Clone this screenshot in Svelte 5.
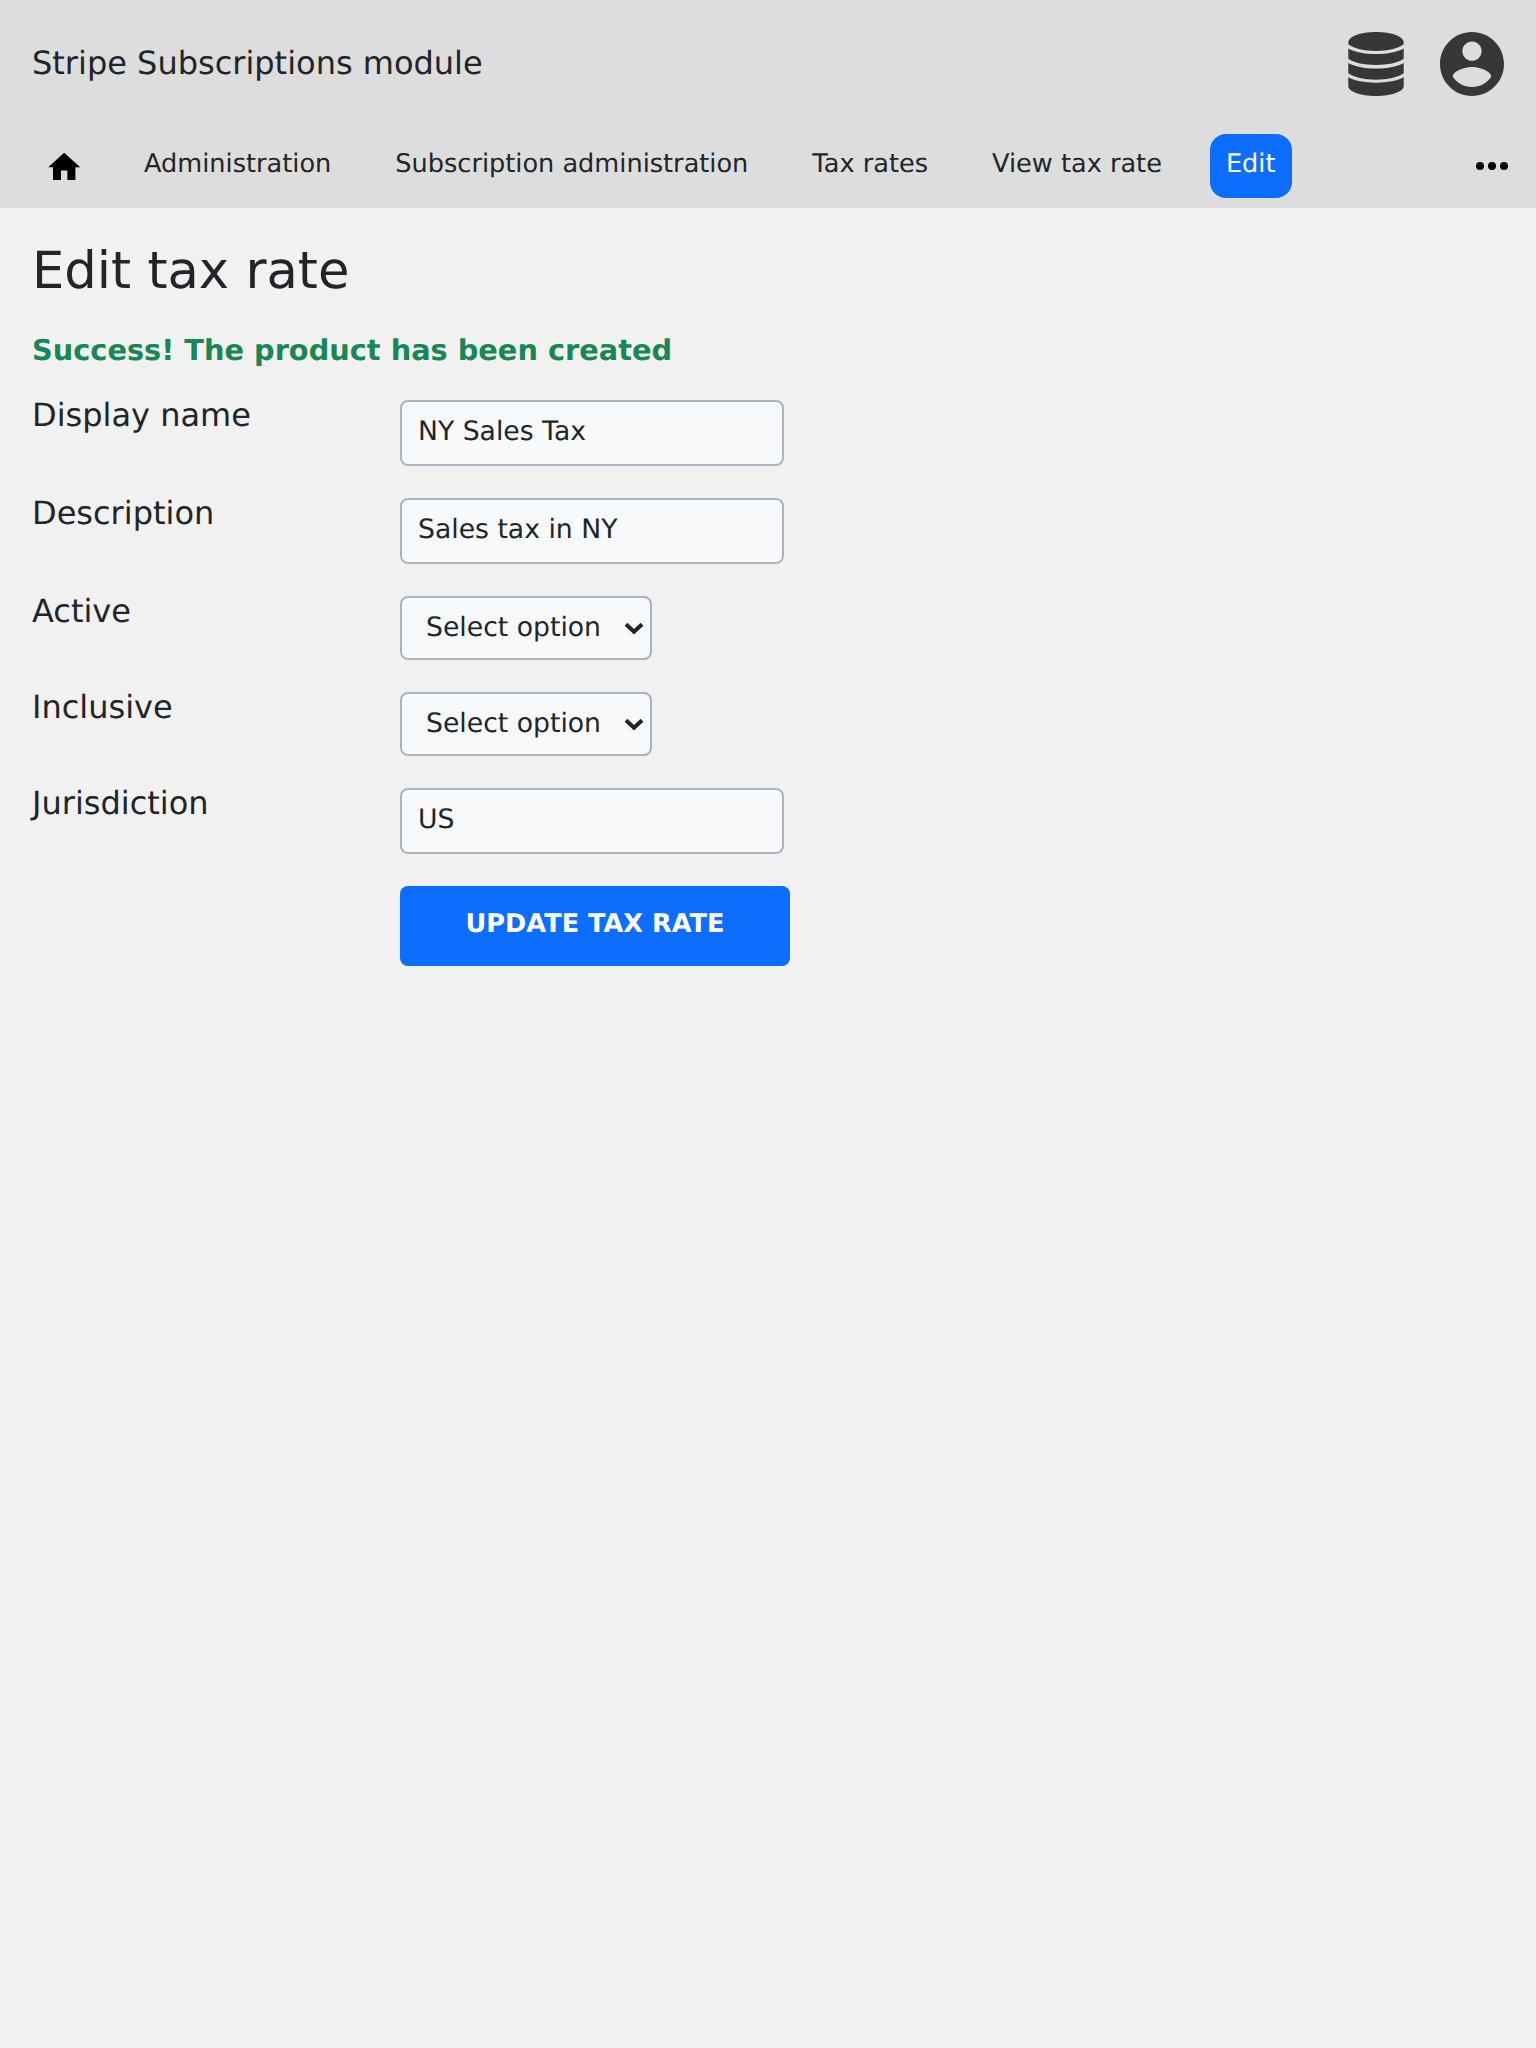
<script>
  const links = ['Administration', 'Subscription administration', 'Tax rates', 'View tax rate'];
  const fields = [
    { id: 'name', label: 'Display name', value: 'NY Sales Tax' },
    { id: 'description', label: 'Description', value: 'Sales tax in NY' },
    { id: 'active', label: 'Active', select: true },
    { id: 'inclusive', label: 'Inclusive', select: true },
    { id: 'jurisdiction', label: 'Jurisdiction', value: 'US' }
  ];
</script>

<header>
  <div class="top">
    <div class="title">Stripe Subscriptions module</div>
    <div class="tools">
      <svg class="db" viewBox="-0.3 0 56.6 64" preserveAspectRatio="none">
        <path d="M0 10.5C0 4.5 12 0 28 0S56 4.5 56 10.5V12.3C50 16.7 40 19 28 19S6 16.7 0 12.3Z" />
        <path d="M0 16.5C6 20 16 22 28 22S50 20 56 16.5V26.8C50 31 40 33 28 33S6 31 0 26.8Z" />
        <path d="M0 31C6 34.5 16 36.5 28 36.5S50 34.5 56 31V41.3C50 45.5 40 47.7 28 47.7S6 45.5 0 41.3Z" />
        <path d="M0 45.3C6 48.8 16 50.7 28 50.7S50 48.8 56 45.3V54C56 59.5 44 64 28 64S0 59.5 0 54Z" />
      </svg>
      <svg class="user" viewBox="2 2 20 20">
        <path d="M12 2C6.48 2 2 6.48 2 12s4.48 10 10 10 10-4.48 10-10S17.52 2 12 2zm0 3c1.66 0 3 1.34 3 3s-1.34 3-3 3-3-1.34-3-3 1.34-3 3-3zm0 14.2c-2.5 0-4.71-1.28-6-3.22.03-1.99 4-3.08 6-3.08 1.99 0 5.97 1.09 6 3.08-1.29 1.94-3.5 3.22-6 3.22z" />
      </svg>
    </div>
  </div>
  <nav>
    <a class="home" href="#home" aria-label="Home">
      <svg viewBox="0 0 24 24"><path d="M10 20v-6h4v6h5v-8h3L12 3 2 12h3v8z" /></svg>
    </a>
    {#each links as link}
      <a href="#page">{link}</a>
    {/each}
    <a class="current" href="#edit">Edit</a>
    <svg class="more" viewBox="0 0 24 24"><circle cx="6" cy="12" r="2" /><circle cx="12" cy="12" r="2" /><circle cx="18" cy="12" r="2" /></svg>
  </nav>
</header>

<main>
  <h1>Edit tax rate</h1>
  <p class="success">Success! The product has been created</p>
  <form>
    {#each fields as field}
      <div class="row">
        <label for={field.id}>{field.label}</label>
        {#if field.select}
          <div class="select">
            <select id={field.id}><option>Select option</option></select>
            <svg viewBox="0 0 20 13"><path d="M2 2.2 10 9.8 18 2.2" /></svg>
          </div>
        {:else}
          <input id={field.id} type="text" value={field.value} />
        {/if}
      </div>
    {/each}
    <button type="button">UPDATE TAX RATE</button>
  </form>
</main>

<style>
  :global(body) {
    background: #f1f1f1;
    color: #212529;
    font: 32px/48px 'DejaVu Sans', sans-serif;
    text-rendering: geometricPrecision;
  }
  header {
    height: 208px;
    background: #ddd;
  }
  .top {
    display: flex;
    justify-content: space-between;
    height: 134px;
    padding: 0 32px;
    box-sizing: border-box;
  }
  .title { padding-top: 39px; }
  .tools {
    display: flex;
    gap: 36px;
    padding-top: 32px;
    fill: #373737;
  }
  .db { width: 56px; height: 64px; }
  .user { width: 64px; height: 64px; }
  nav {
    display: flex;
    align-items: flex-start;
    gap: 32px;
    padding: 0 20px 0 32px;
    font-size: 25.6px;
    line-height: 38px;
  }
  nav a {
    box-sizing: border-box;
    height: 64px;
    padding: 11px 16px 0;
    color: inherit;
    text-decoration: none;
    white-space: nowrap;
  }
  nav .home {
    width: 64px;
    padding: 13.8px 0 0 12.8px;
  }
  .home svg { display: block; width: 38.4px; height: 38.4px; fill: #000; }
  nav .current {
    width: 82px;
    border-radius: 16px;
    background: #0d6efd;
    color: #fff;
  }
  .more { width: 48px; height: 48px; margin: 8px 0 0 auto; fill: #000; }
  main { padding: 0 32px; }
  h1 {
    margin: 0;
    padding-top: 33px;
    font-size: 51.2px;
    font-weight: 400;
    line-height: 61px;
  }
  .success {
    margin: 27px 0 28px;
    color: #198754;
    font-size: 28.8px;
    font-weight: 700;
    line-height: 43px;
  }
  form { display: flex; flex-direction: column; gap: 32px; }
  .row { display: flex; align-items: flex-start; }
  label { width: 368px; margin-top: -9px; }
  input, select {
    box-sizing: border-box;
    margin: 0;
    border: 2px solid #a7b5c3;
    border-radius: 8px;
    background: #f8f9fb;
    color: #212529;
    font: 26.667px/32px 'DejaVu Sans', sans-serif;
    text-rendering: geometricPrecision;
    outline: 0;
  }
  input { width: 384px; height: 66px; padding: 13px 16px 17px; }
  .select { display: grid; width: 252px; height: 64px; }
  .select > * { grid-area: 1 / 1; }
  select { appearance: none; padding: 14px 24px; }
  .select svg {
    width: 20px;
    height: 13px;
    margin-right: 8px;
    align-self: center;
    justify-self: end;
    fill: none;
    stroke: #212529;
    stroke-width: 4;
    pointer-events: none;
  }
  button {
    width: 390px;
    height: 80px;
    margin-left: 368px;
    padding: 0 0 4px;
    border: 0;
    border-radius: 8px;
    background: #0d6efd;
    color: #fff;
    font: 700 25.6px/32px 'DejaVu Sans', sans-serif;
    text-rendering: geometricPrecision;
  }
</style>
